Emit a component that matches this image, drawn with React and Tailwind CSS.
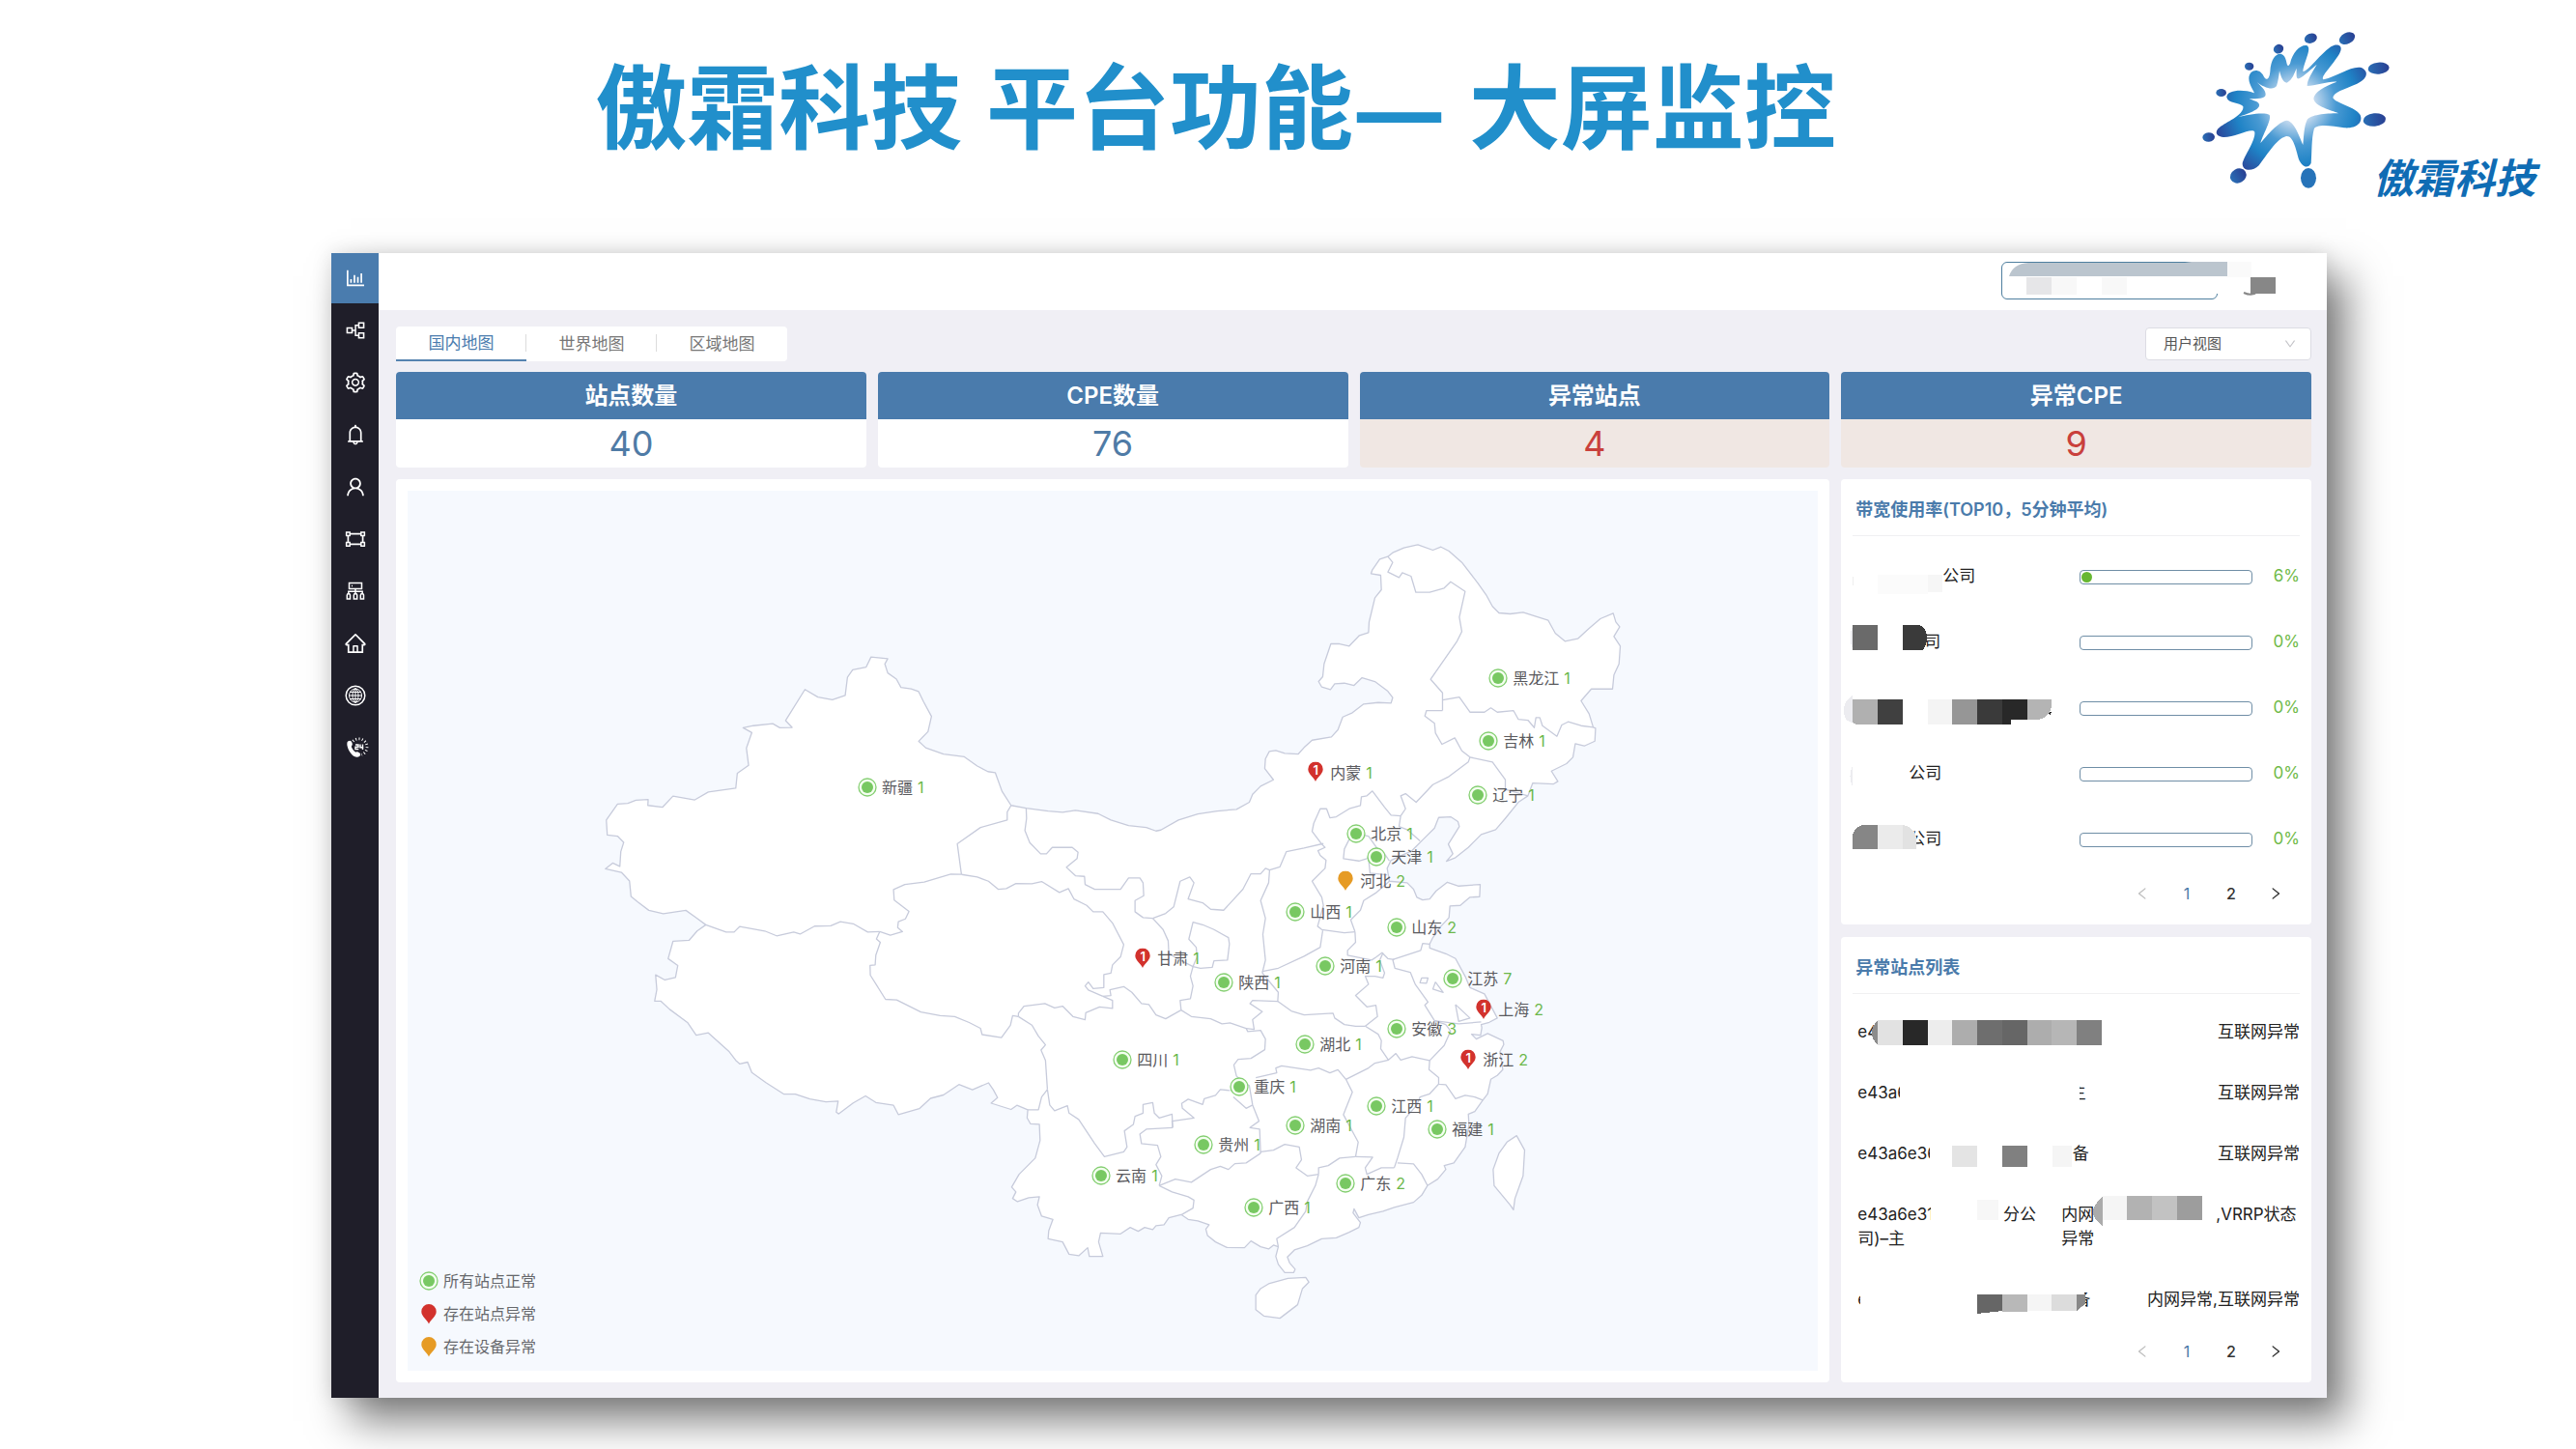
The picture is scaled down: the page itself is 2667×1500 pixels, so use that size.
import React, { useState } from 'react';
import {
  AiOutlineBarChart, AiOutlinePartition, AiOutlineSetting, AiOutlineBell,
  AiOutlineUser, AiOutlineGateway, AiOutlineHome, AiOutlineLeft, AiOutlineRight, AiOutlineDown,
} from 'react-icons/ai';

// Map canvas, in map units.
const VIEW = { x: 422, y: 508, w: 1460, h: 910 };

// Border points are stored per tile: [origin x, origin y, units per px x, units per px y].
const TILES = {
  nw: [600, 640, 3, 2.8],
  mid: [1000, 780, 3, 3],
  ne: [1300, 540, 3, 3],
  se: [1250, 960, 3, 3],
};

const toMap = ([tile, pts]) => {
  const [ox, oy, sx, sy] = TILES[tile];
  return pts.split(' ').map((p) => {
    const [x, y] = p.split(',').map(Number);
    return `${(ox + x / sx).toFixed(1)},${(oy + y / sy).toFixed(1)}`;
  }).join(' ');
};

const COAST = [
  ['nw', '905,111 957,116 948,131 957,157 984,175 998,199 1030,203 1053,211 1068,240 1093,283 1082,327 1053,355 1075,374 1130,392 1195,400 1235,427 1268,443 1291,446 1312,500 1340,541'],
  ['mid', '187,168 255,177 300,181 340,175 410,185 450,205 505,222 560,228 590,239 605,236 660,205 720,186 780,177 840,172 880,150 890,125 915,100 955,80'],
  ['ne', '28,765 30,735 42,712 62,709 90,718 132,720 150,700 175,677 235,667 255,645 270,605 300,592 335,565 380,560 420,562 425,545 410,525 370,495 330,483 305,507 275,500 245,502 232,520 205,512 195,495 208,480 212,440 233,378 260,378 290,385 322,352 350,343 352,310 370,235 390,210 388,165 358,160 362,148 385,115 410,107 425,95 460,80 503,70 550,87 575,77 600,90 640,125 690,190 715,225 735,262 755,282 790,285 830,280 870,293 908,305 930,345 960,370 1000,362 1035,330 1070,300 1110,283 1118,310 1130,325 1112,355 1132,385 1128,440 1112,475 1108,518 1042,518 1010,555 1035,595 1048,637 1055,640 1053,680 1020,695 992,688 985,730 965,750 918,773 938,805 925,813 860,810 845,850 815,870 775,920 745,955 700,970 660,1010 620,1042 592,1053 612,1030 598,1000 632,945 628,930 605,915 568,917 555,950 520,985 500,1005 485,1020 420,1050 408,1075 415,1115 470,1120 490,1140 500,1165 518,1173 540,1170 560,1145 595,1118 630,1130 697,1125 695,1163 665,1165 635,1190 603,1192 600,1228 575,1255 550,1290 540,1310'],
  ['se', '690,62 740,80 770,95 800,150 815,185 860,205 900,280 875,293 850,300 852,310 848,333 820,330 835,345 870,328 918,350 920,362 908,385 917,440 900,458 880,470 870,515 855,535 830,570 810,578 812,610 800,680 765,730 735,738 740,750 715,780 683,800 665,830 640,852 580,868 545,880 500,890 470,900 455,872 452,885 475,915 470,930 440,945 400,962 355,965 310,987 270,1000 248,1022 255,1040 272,1060 268,1070 240,1070 220,1045 212,1020 220,990 205,985 190,997 165,990 135,972 115,993 60,992 25,975 0,955'],
  ['mid', '745,1475 755,1462 720,1450 690,1445 668,1430 630,1440 615,1462 590,1465 580,1477 555,1470 535,1482 510,1470 480,1490 418,1487 412,1515 425,1560 383,1560 378,1533 350,1558 320,1553 300,1515 255,1505 257,1480 270,1445 235,1435 222,1400 228,1375 195,1378 160,1390 145,1380 155,1360 142,1345 165,1305 215,1255 230,1200 228,1150 200,1148 190,1130 192,1105'],
  ['nw', '1358,1410 1340,1422 1278,1404 1298,1388 1285,1365 1270,1345 1220,1365 1178,1350 1130,1380 1090,1390 1055,1420 990,1437 975,1410 920,1402 888,1383 850,1403 805,1435 797,1430 803,1398 765,1400 715,1392 670,1378 635,1378 580,1345 535,1315 522,1285 497,1290 485,1280 465,1255 400,1200 362,1207 335,1170 280,1132 252,1108 233,1108 240,1075 236,1032 265,1047 298,1040 305,1005 275,985 290,935 340,932 365,905 392,887 360,865 330,845 260,855 215,845 180,820 160,805 155,760 130,735 80,725 103,708 125,718 128,675 137,648 118,630 86,627 83,583 118,537 150,535 175,526 213,524 212,541 258,546 290,514 358,525 400,502 485,491 490,448 525,425 518,375 535,330 508,316 540,310 600,304 622,316 660,315 640,295 700,205 740,227 785,235 825,222 832,170 848,148 890,140'],
];

const ISLANDS = [
  ['se', '190,1105 250,1088 305,1085 315,1100 295,1120 280,1170 225,1212 175,1205 150,1185 150,1140 165,1120'],
  ['se', '960,645 985,690 980,770 955,840 950,875 940,860 890,800 887,750 905,700 930,665'],
];

const BORDERS = [
  ['nw', '1340,541 1328,560 1328,583 1245,605 1173,652 1186,741'],
  ['nw', '1186,741 1153,740 1070,763 1010,770 975,785 977,815 1023,848 1012,870 990,878 988,895 1003,907 965,917 932,907'],
  ['nw', '932,907 895,908 850,884 810,878 780,890 730,891 685,914 665,908 612,919 575,905 497,892 480,908 455,908 392,887'],
  ['nw', '932,907 922,928 934,938 920,975 918,1003 902,1005 903,1033 950,1103 985,1105 1060,1140 1120,1150 1165,1153 1210,1170 1245,1187 1250,1205 1310,1214 1338,1178 1345,1150 1363,1153'],
  ['nw', '1363,1153 1405,1178 1425,1210 1447,1235 1433,1250 1447,1280 1453,1364'],
  ['mid', '253,1042 235,1065 225,1105 192,1105'],
  ['mid', '-14,374 35,382 70,395 100,420 125,418 155,402 205,403 235,396 290,430 318,418 335,450 375,470 395,490 425,490 455,525 490,592 480,630 455,655 450,680 428,685 428,725 395,728 380,708 370,720 380,733 425,752'],
  ['mid', '425,752 455,765 455,790 415,785 372,803 370,825 332,815 300,783 275,788 245,775 180,783 163,805 163,815'],
  ['mid', '187,168 188,200 183,238 198,275 232,310 250,310 268,290 330,290 348,305 345,325 312,352 340,378 368,380 370,405 400,420 480,420 505,385 540,385 550,400 552,440 525,455 525,490 550,508 580,510'],
  ['mid', '580,510 620,495 645,475 665,395 695,382 708,400 690,450 735,462 760,482 800,485 860,420 885,372 915,372 930,355 943,360 975,350 995,303 1050,292 1110,278'],
  ['mid', '580,510 612,545 628,580 630,620 665,640 705,660'],
  ['mid', '705,660 718,630 715,600 692,575 705,522 735,530 770,545 815,570 818,590 812,640 770,642 765,662 728,665 705,660 697,690 705,720 697,760 665,765 668,795'],
  ['mid', '425,752 450,750 447,732 490,722 515,740 545,775 568,778 590,810 620,822 668,795'],
  ['mid', '668,795 700,815 760,822 795,838 820,835 870,852 875,862 915,858 930,885 928,918 885,945 845,948 832,965 840,1000 850,1010'],
  ['mid', '870,852 895,855 890,825 920,800 882,775 890,765 968,768 970,740 945,710 920,680'],
  ['mid', '920,680 930,640 922,560 930,510 915,455 940,400 943,360'],
  ['mid', '920,675 970,665 1050,628 1100,600 1108,548'],
  ['ne', '205,1000 215,1010 193,1020 200,1035 218,1050 215,1075 175,1115 205,1165 210,1190 192,1255 205,1265 275,1275 308,1272'],
  ['ne', '308,1272 295,1235 325,1205 335,1175 375,1150 415,1115'],
  ['ne', '308,1272 310,1305 285,1330 285,1345 360,1360 375,1350 392,1337 410,1355 430,1358'],
  ['ne', '205,1000 175,960 180,935 200,890 220,890 230,918 250,915 290,890 325,880 328,853 345,850 362,835 400,885 420,910 450,912'],
  ['ne', '450,912 445,945 470,955 510,990'],
  ['ne', '450,912 465,890 450,850 465,843 498,870 550,815 600,790 660,745 665,730'],
  ['ne', '665,730 735,745 775,800 775,830 845,850'],
  ['ne', '665,730 640,710 618,670 578,690 558,655 555,625 525,602 530,585 580,585'],
  ['ne', '580,585 580,530 543,488 625,370 640,340 632,295 650,215 605,185 585,205 540,218 497,218 482,168 455,157 445,172 410,155 425,125 410,107'],
  ['ne', '580,552 632,543 665,590 710,590 730,577 750,590 800,585 815,612 845,615 865,638 870,607 882,607 890,632 935,665 950,630 970,620 1010,632 1048,637'],
  ['ne', '290,985 275,1015 272,1045 320,1052 345,1045 375,1010 350,975 300,965 290,985'],
  ['ne', '350,1045 355,1090 408,1095'],
  ['ne', '375,1010 400,1030 415,1052'],
  ['se', '575,98 662,70 668,48 690,50'],
  ['se', '575,98 582,125 630,138 645,175 685,230 675,240 705,288 740,300'],
  ['se', '705,288 780,298 850,292'],
  ['se', '665,155 685,155 680,172 660,170 665,155'],
  ['se', '708,168 732,200 700,190 708,168'],
  ['se', '770,238 815,280 780,290 770,238'],
  ['se', '740,300 755,320 735,365 690,412'],
  ['se', '545,78 535,100 550,140 545,155 520,150 490,150 500,175 460,210 495,245 523,240 528,275 490,305'],
  ['se', '218,228 260,258 300,270 390,265 395,280 425,300 460,305 490,305'],
  ['se', '490,305 530,330 540,350 538,375 562,410 585,390 600,410 635,400 690,412'],
  ['se', '690,412 688,440 718,465 718,485 740,487 770,530 800,520 830,525 855,535'],
  ['se', '718,485 690,515 660,525 650,550 615,590 610,650 590,715 580,745'],
  ['se', '590,730 640,733 665,765 683,800'],
  ['se', '580,745 540,745 495,765 490,745 513,712 460,710'],
  ['se', '562,410 520,420 500,435 430,470 405,440 380,450 345,435 320,442 230,428 212,435 215,450 150,465'],
  ['se', '430,470 450,510 430,560 422,580 460,650 468,665 460,710'],
  ['se', '460,710 410,715 375,738 345,745 345,765'],
  ['se', '345,765 310,770 275,745 292,720 285,680 240,672 205,690 165,695'],
  ['se', '345,765 335,800 310,850 305,880 270,930 215,965 220,990'],
  ['mid', '850,1010 880,1030 890,1090 910,1140 882,1160 912,1165 915,1240'],
  ['mid', '830,1065 870,1100 890,1090'],
  ['mid', '820,1045 790,1042 775,1060 740,1070 735,1088 690,1072 670,1085 672,1100 708,1130 640,1140 642,1160'],
  ['mid', '642,1160 560,1165 540,1180 545,1210 595,1215 605,1250 590,1275 608,1310 600,1340'],
  ['mid', '253,1042 260,1090 275,1108 315,1092 320,1115 350,1135 400,1210 430,1250 490,1235 500,1220 492,1170 520,1150 525,1125 550,1115 550,1088 580,1082 585,1115 600,1130 640,1118 642,1160'],
  ['mid', '600,1340 650,1320 700,1330 760,1290 790,1280 815,1290 835,1272 870,1270 915,1240'],
  ['mid', '600,1340 640,1360 690,1375 708,1385 705,1410 670,1430'],
];

const coastPoints = COAST.map(toMap).join(' ');

const SITES = [
  { name: '新疆', count: 1, x: 898, y: 815 },
  { name: '内蒙', count: 1, x: 1362, y: 799, status: 'site', alarms: 1 },
  { name: '黑龙江', count: 1, x: 1551, y: 702 },
  { name: '吉林', count: 1, x: 1541, y: 767 },
  { name: '辽宁', count: 1, x: 1530, y: 823 },
  { name: '北京', count: 1, x: 1404, y: 863 },
  { name: '天津', count: 1, x: 1425, y: 887 },
  { name: '河北', count: 2, x: 1393, y: 911, status: 'device' },
  { name: '山西', count: 1, x: 1341, y: 943 },
  { name: '山东', count: 2, x: 1446, y: 959 },
  { name: '甘肃', count: 1, x: 1183, y: 991, status: 'site', alarms: 1 },
  { name: '陕西', count: 1, x: 1267, y: 1016 },
  { name: '河南', count: 1, x: 1372, y: 999 },
  { name: '江苏', count: 7, x: 1504, y: 1012 },
  { name: '上海', count: 2, x: 1536, y: 1044, status: 'site', alarms: 1 },
  { name: '安徽', count: 3, x: 1446, y: 1064 },
  { name: '浙江', count: 2, x: 1520, y: 1096, status: 'site', alarms: 1 },
  { name: '湖北', count: 1, x: 1351, y: 1080 },
  { name: '四川', count: 1, x: 1162, y: 1096 },
  { name: '重庆', count: 1, x: 1283, y: 1124 },
  { name: '江西', count: 1, x: 1425, y: 1144 },
  { name: '湖南', count: 1, x: 1341, y: 1164 },
  { name: '福建', count: 1, x: 1488, y: 1168 },
  { name: '贵州', count: 1, x: 1246, y: 1184 },
  { name: '云南', count: 1, x: 1140, y: 1216 },
  { name: '广东', count: 2, x: 1393, y: 1224 },
  { name: '广西', count: 1, x: 1298, y: 1249 },
];

const LEGEND = [
  { label: '所有站点正常' },
  { label: '存在站点异常', status: 'site' },
  { label: '存在设备异常', status: 'device' },
];

const STATS = [
  { label: '站点数量', value: 40 },
  { label: 'CPE数量', value: 76 },
  { label: '异常站点', value: 4, alert: true },
  { label: '异常CPE', value: 9, alert: true },
];

const TABS = ['国内地图', '世界地图', '区域地图'];

// Mosaic blocks are [x, y, width, height, fill], with y = 0 on the middle of the row.
const USAGE = [
  {
    name: <span className="ml-[93px]">公司</span>,
    percent: 6,
    blocks: [[0, 0, 1, 9, '#eeeeee'], [26, -2, 52, 20, '#fbfbfb'], [78, -2, 15, 18, '#f6f6f6']],
  },
  {
    name: <span className="ml-[74px]">司</span>,
    percent: 0,
    blocks: [[0, -18, 26, 26, '#6a6a6a'], [52, -18, 17, 26, '#3a3a3a']],
    extra: <><path d="M0-16q-5 11 0 22z" fill="#ececf0" /><path d="M69-18c5 1 8 7 8 13s-2 10-4 13h-4z" fill="#3a3a3a" /></>,
  },
  {
    name: null,
    percent: 0,
    blocks: [
      [26, -9, 26, 26, '#404040'], [78, -9, 25, 26, '#f4f4f4'], [103, -9, 26, 26, '#969696'],
      [129, -9, 26, 26, '#3a3a3a'], [155, -9, 26, 21, '#282828'], [155, 12, 9, 5, '#282828'],
    ],
    extra: (
      <>
        <path d="M0-13q-9 5-9 16t9 12z" fill="#ececf0" />
        <path d="M0-9h26v26H6q-4 0-6-3z" fill="#b0b0b0" />
        <path d="M181-9h25v5q-1 14-14 16h-11z" fill="#b4b4b4" />
        <path d="M202 5l4-1-1 3z" fill="#222222" />
      </>
    ),
  },
  {
    name: <span className="ml-[58px]">公司</span>,
    percent: 0,
    extra: <path d="M0-8q-5 10 0 22z" fill="#ececf0" />,
  },
  {
    name: <span className="ml-[58px]">公司</span>,
    percent: 0,
    blocks: [[26, -15, 26, 25, '#ebebeb']],
    extra: (
      <>
        <path d="M26-15v25H0V-5q3-10 13-10z" fill="#868686" />
        <path d="M52-15q12 2 14 14v11H52z" fill="#e2e2e2" />
      </>
    ),
  },
];

const ABNORMAL = [
  {
    name: 'e4',
    status: '互联网异常',
    blocks: [
      [26, -13, 26, 26, '#e2e2e2'], [52, -13, 26, 26, '#282828'], [78, -13, 25, 26, '#ededed'],
      [103, -13, 26, 26, '#adadad'], [129, -13, 26, 26, '#6e6e6e'], [155, -13, 26, 26, '#666666'],
      [181, -13, 25, 26, '#adadad'], [206, -13, 26, 26, '#b6b6b6'], [232, -13, 26, 26, '#808080'],
    ],
    extra: <path d="M26-13q-12 13 0 26z" fill="#8c8c8c" />,
  },
  {
    name: <>e43a6<span className="ml-[168px]">主</span></>,
    status: '互联网异常',
    blocks: [[49, -12, 186, 24, '#ffffff']],
  },
  {
    name: <>e43a6e36<span className="ml-[140px]">备</span></>,
    status: '互联网异常',
    blocks: [
      [80, -12, 20, 24, '#ffffff'], [103, -9, 26, 22, '#e4e4e4'],
      [155, -9, 26, 22, '#808080'], [207, -9, 20, 22, '#f5f5f5'],
    ],
  },
  {
    name: <>e43a6e31<span className="ml-[72px]">分公</span><br />司)–主</>,
    status: (
      <span className="block text-left pl-0.5">
        内网<span className="inline-block w-[126px]" />,VRRP状态<br />异常
      </span>
    ),
    blocks: [
      [81, -24, 50, 24, '#ffffff'], [129, -28, 22, 21, '#f7f7f7'], [259, -32, 25, 25, '#f5f5f5'],
      [284, -32, 26, 25, '#b2b2b2'], [310, -32, 26, 25, '#c2c2c2'], [336, -32, 26, 25, '#9d9d9d'],
    ],
    extra: <path d="M259-31q-20 16 0 30z" fill="#ababab" />,
  },
  {
    name: <>e<span className="ml-[214px]">备</span></>,
    status: '内网异常,互联网异常',
    blocks: [
      [8, -12, 121, 26, '#ffffff'], [155, -6, 26, 18, '#b8b8b8'],
      [181, -6, 25, 17, '#f5f5f5'], [206, -6, 26, 17, '#dcdcdc'], [228, -12, 12, 6, '#ffffff'],
    ],
    extra: (
      <>
        <path d="M129-6h26v17l-26 3z" fill="#666666" />
        <path d="M232-6h9v10q-4 2-9 7z" fill="#888888" />
        <path d="M232 11l9-7v8h-9z" fill="#ffffff" />
      </>
    ),
  },
];

const Mosaic = ({ blocks = [], children }) => (
  <svg className="absolute left-0 top-1/2 -translate-y-1/2 overflow-visible pointer-events-none" width="260" height="50" viewBox="0 -25 260 50" shapeRendering="crispEdges">
    {blocks.map(([x, y, w, h, fill]) => <rect key={`${x}-${y}`} x={x} y={y} width={w} height={h} fill={fill} />)}
    {children}
  </svg>
);

const TopologyIcon = () => (
  <svg width="20" height="20" viewBox="0 0 20 20" fill="none" stroke="currentColor" strokeWidth="1.5">
    <path d="M3.5 1.5h13v6h-13zM10 7.500v5M2.800 13v-2.800h14.400V13M6 4.500h1" />
    <path d="M1.300 14l.7-1.300h1.800l.7 1.300v4H1.300zM8.300 14l.7-1.300h2l.7 1.300v4H8.300zM15.300 14l.7-1.300h1.800l.7 1.300v4h-3.200z" />
  </svg>
);

const GlobeIcon = () => (
  <svg width="22" height="22" viewBox="0 0 22 22" fill="none" stroke="currentColor">
    <circle cx="11" cy="11" r="9.800" strokeWidth="1.500" />
    <ellipse cx="11" cy="11" rx="6.500" ry="7" />
    <ellipse cx="11" cy="11" rx="3" ry="7" />
    <path d="M11 3v16M4 11h14M5.500 7.500h11M5.500 14.500h11" />
  </svg>
);

const HotlineIcon = () => (
  <svg width="24" height="24" viewBox="0 0 24 24" fill="none" className="ml-1">
    <path d="M1.500 6.500C2 4.800 4.500 4 5.500 5.200c1 1.500 1.800 3 1 4.200-.8 1-1 1.500 0 3 1.200 2 2.600 3.600 4 4.300 1.200-.8 2-.4 3.500.6 1.500 1.100 1.500 2.400.4 3.400-2.200 2-5.600 1.200-8.200-1.700C3 15.500.700 10 1.500 6.500z" fill="currentColor" />
    <path d="M10 9h3v2.200h-3v2.300h3.300M15 8.500v3.200h3.300M17.500 8.500v5.500" stroke="currentColor" strokeWidth="1.400" />
    <path d="M7.500 5.300A8.500 8.500 0 1 1 16.400 19.300" stroke="currentColor" strokeWidth="2.800" strokeDasharray="1 2.300" />
  </svg>
);

const NAV = [
  { label: '监控', icon: <AiOutlineBarChart size={24} /> },
  { label: '拓扑', icon: <AiOutlinePartition size={24} /> },
  { label: '设置', icon: <AiOutlineSetting size={24} /> },
  { label: '告警', icon: <AiOutlineBell size={24} /> },
  { label: '用户', icon: <AiOutlineUser size={24} /> },
  { label: '网关', icon: <AiOutlineGateway size={24} /> },
  { label: '设备', icon: <TopologyIcon /> },
  { label: '首页', icon: <AiOutlineHome size={24} /> },
  { label: '网络', icon: <GlobeIcon /> },
  { label: '热线', icon: <HotlineIcon /> },
];

const Marker = ({ status, alarms }) => {
  if (!status) {
    return (
      <svg width="20" height="20" viewBox="0 0 20 20" className="shrink-0">
        <circle cx="10" cy="10" r="9" fill="#f4fff0" stroke="#85cf72" strokeWidth="1.300" />
        <circle cx="10" cy="10" r="6" fill="#78c862" />
      </svg>
    );
  }
  return (
    <span className="relative flex w-5 justify-center shrink-0">
      <svg width="16" height="21" viewBox="0 0 16 21">
        <path d="M8 20.500C6.500 16.500.300 13 .300 7.800a7.700 7.700 0 0 1 15.400 0C15.700 13 9.500 16.500 8 20.500z" fill={status === 'site' ? '#d2322d' : '#e69b25'} />
      </svg>
      {alarms && <span className="absolute inset-x-0 top-0 text-center text-[13px] leading-4 font-semibold text-white">{alarms}</span>}
    </span>
  );
};

const Logo = () => (
  <svg width="200" height="167" viewBox="50 58 600 501" className="shrink-0 self-start">
    <defs>
      <radialGradient id="splash" gradientUnits="userSpaceOnUse" cx="350" cy="290" r="260">
        <stop offset="0" stopColor="#ffffff" />
        <stop offset="0.220" stopColor="#c5daef" />
        <stop offset="0.480" stopColor="#4a9ad3" />
        <stop offset="0.720" stopColor="#1f83c6" />
        <stop offset="1" stopColor="#2b479b" />
      </radialGradient>
      <linearGradient id="drop" x1="0" y1="0" x2="1" y2="0">
        <stop offset="0" stopColor="#2a6fb5" />
        <stop offset="1" stopColor="#293f92" />
      </linearGradient>
    </defs>
    <path
      fill="url(#splash)"
      d="M135 270C135 245 190 245 218 256C228 262 204 235 204 212C205 180 240 180 250 205C258 220 268 215 270 190C272 150 290 132 305 136C326 142 318 190 332 165C340 130 365 105 385 110C400 120 375 160 372 190C390 190 440 115 470 108C500 105 492 130 475 150C455 180 425 208 436 215C480 205 520 172 553 178C580 190 570 215 540 228C500 245 465 255 465 272C475 290 535 300 550 325C560 350 535 368 500 365C460 358 410 352 406 370C398 400 400 440 397 475C387 495 367 485 358 460C350 430 340 385 318 392C290 400 260 450 235 482C215 502 183 500 184 475C190 450 225 405 222 378C215 362 160 395 125 394C95 390 98 370 122 357C150 340 190 320 186 298C175 285 140 290 135 270Z"
    />
    <path
      fill="#ffffff"
      d="M205 275C230 275 255 275 256 262C256 245 240 235 228 222C250 240 280 250 290 235C295 220 297 205 299 188C303 205 310 225 322 225C340 215 345 195 352 180C352 200 350 215 360 212C375 205 400 180 415 168C400 195 385 215 385 235C410 235 450 220 477 222C440 235 405 255 405 275C410 300 460 310 482 320C440 320 395 325 385 340C375 360 375 390 372 418C360 390 345 345 322 342C295 345 260 390 240 412C250 380 275 340 268 325C250 315 200 325 170 332C200 320 240 310 236 292C232 282 215 280 205 275Z"
    />
    <g fill="url(#drop)">
      <ellipse cx="118" cy="256" rx="16" ry="12" />
      <ellipse cx="205" cy="174" rx="14" ry="12" />
      <ellipse cx="296" cy="120" rx="16" ry="14" transform="rotate(-30 296 120)" />
      <ellipse cx="396" cy="87" rx="20" ry="15" transform="rotate(-20 396 87)" />
      <ellipse cx="509" cy="87" rx="26" ry="17" transform="rotate(-25 509 87)" />
      <ellipse cx="607" cy="180" rx="33" ry="18" transform="rotate(-5 607 180)" />
      <ellipse cx="594" cy="340" rx="35" ry="20" transform="rotate(-5 594 340)" />
      <ellipse cx="79" cy="394" rx="19" ry="14" transform="rotate(-5 79 394)" />
      <ellipse cx="171" cy="514" rx="26" ry="22" transform="rotate(-30 171 514)" />
    </g>
    <ellipse cx="389" cy="521" rx="24" ry="31" fill="#2673b9" />
  </svg>
);

const Pagination = () => (
  <nav className="mt-auto mb-4 flex h-8 justify-end pr-0.5 text-base text-[#333]">
    <button className="flex w-[46px] items-center justify-center text-[#c0c0c0]" aria-label="上一页" disabled><AiOutlineLeft size={16} /></button>
    <button className="w-[46px] text-[#4878a8]">1</button>
    <button className="w-[46px] font-medium">2</button>
    <button className="flex w-[46px] items-center justify-center" aria-label="下一页"><AiOutlineRight size={16} /></button>
  </nav>
);

const Panel = ({ title, children }) => (
  <section className="flex flex-1 flex-col rounded bg-white px-3">
    <h2 className="border-b border-[#f0f0f2] px-[3px] pt-5 pb-3.5 text-lg leading-6 font-semibold text-[#4a7bab]">{title}</h2>
    {children}
    <Pagination />
  </section>
);

const SiteMap = () => (
  <section className="col-span-3 rounded bg-white p-3">
    <div className="relative aspect-[1460/911] w-full bg-[#f6f9fe]">
      <svg className="block h-full w-full" viewBox={`${VIEW.x} ${VIEW.y} ${VIEW.w} ${VIEW.h}`} fill="none" stroke="#c7cbdb" strokeWidth="1.300" strokeLinejoin="round">
        <polygon points={coastPoints} fill="#ffffff" />
        {ISLANDS.map((b) => <polygon key={b[1]} points={toMap(b)} fill="#ffffff" />)}
        {BORDERS.map((b) => <polyline key={b[1]} points={toMap(b)} />)}
      </svg>
      {SITES.map((s) => (
        <div
          key={s.name}
          className="absolute -ml-2.5 flex -translate-y-1/2 items-center gap-[5px] text-base leading-5 whitespace-nowrap text-[#5a5a5e]"
          style={{ left: `${((s.x - VIEW.x) / VIEW.w) * 100}%`, top: `${((s.y - VIEW.y) / VIEW.h) * 100}%` }}
        >
          <Marker status={s.status} alarms={s.alarms} />
          <span>{s.name}</span>
          <span className="text-[#6cb84a]">{s.count}</span>
        </div>
      ))}
      <ul className="absolute bottom-2 left-3 text-base text-[#66686c]">
        {LEGEND.map((l) => (
          <li key={l.label} className="flex h-[34px] items-center gap-[5px]">
            <Marker status={l.status} />
            {l.label}
          </li>
        ))}
      </ul>
    </div>
  </section>
);

const App = () => {
  const [tab, setTab] = useState(TABS[0]);

  return (
    <div className="min-h-screen overflow-hidden bg-white pb-[53px] font-['Inter','Noto_Sans_CJK_SC',sans-serif]">
      <header className="flex items-start pt-[30px] pb-14 pl-60">
        <h1 className="mt-2.5 flex-1 text-center font-['Open_Sans','Noto_Sans_CJK_SC',sans-serif] text-[95px] leading-[140px] font-bold text-[#218fcb]">
          傲霜科技 平台功能— 大屏监控
        </h1>
        <div className="flex h-[176px] w-[390px] items-end">
          <Logo />
          <span className="-ml-5 text-[42px] leading-[42px] font-bold whitespace-nowrap text-[#0f6cb4] italic">傲霜科技</span>
        </div>
      </header>

      <div className="mr-[258px] ml-[343px] flex shadow-[20px_24px_40px_rgba(0,0,0,0.5),0_0_20px_rgba(0,0,0,0.12)]">
        <nav className="flex w-[49px] shrink-0 flex-col gap-0.5 bg-[#1f1e29] text-white">
          {NAV.map((n, i) => (
            <a key={n.label} href="#" title={n.label} className={`flex h-[52px] items-center justify-center ${i === 0 ? 'bg-[#4a7cae]' : ''}`}>
              {n.icon}
            </a>
          ))}
        </nav>

        <div className="min-w-0 flex-1 bg-[#f0eff5]">
          <div className="flex h-[59px] items-center justify-end bg-white pr-[53px] pb-0.5">
            <div className="relative w-[284px]">
              <input aria-label="搜索" className="block h-[39px] w-[224px] rounded-md border border-[#4f7f9f] outline-none" />
              <svg className="absolute top-0 left-0" width="284" height="39" viewBox="0 0 284 39">
                <path d="M8 15Q12 2 28 1H190L204-1H234V15z" fill="#bbc5ce" />
                <path d="M216 15h18v18h-11z" fill="#ffffff" />
                <path d="M234-1h25v17h-25z" fill="#fafafa" />
                <path d="M26 16h26v18H26z" fill="#e6e6e8" />
                <path d="M52 16h26v18H52zM104 16h26v18h-26z" fill="#f8f8f8" />
                <path d="M258 16h26v17h-26z" fill="#878787" />
                <path d="M251 32q9 4 14-1" fill="none" stroke="#878787" strokeWidth="2" />
              </svg>
            </div>
          </div>

          <div className="pt-[17px] pr-4 pb-4 pl-[18px]">
            <div className="flex h-9 items-center justify-between">
              <div className="flex h-9 rounded bg-white" role="tablist">
                {TABS.map((t, i) => (
                  <button
                    key={t}
                    role="tab"
                    aria-selected={t === tab}
                    onClick={() => setTab(t)}
                    className={`relative w-[135px] text-[17px] leading-[34px] cursor-pointer ${t === tab ? 'border-b-2 border-[#5583b0] text-[#4a7cae]' : 'text-[#777]'}`}
                  >
                    {t}
                    {i < TABS.length - 1 && <span className="absolute top-2 right-0 h-[18px] w-px bg-[#dcdcdc]" />}
                  </button>
                ))}
              </div>
              <div className="relative w-[172px]">
                <select aria-label="视图" className="block h-[34px] w-full appearance-none rounded border border-[#dcdce4] bg-white px-[18px] text-[15px] text-[#555] outline-none">
                  <option>用户视图</option>
                </select>
                <AiOutlineDown size={14} className="pointer-events-none absolute top-2.5 right-[15px] text-[#c4c4c8]" />
              </div>
            </div>

            <div className="mt-[11px] grid grid-cols-4 gap-3">
              {STATS.map((s) => (
                <div key={s.label} className={`overflow-hidden rounded text-center ${s.alert ? 'bg-[#f0e7e3]' : 'bg-white'}`}>
                  <div className="bg-[#4a7bac] text-2xl leading-[49px] font-semibold text-white">{s.label}</div>
                  <div className={`text-4xl leading-[50px] ${s.alert ? 'text-[#c9403c]' : 'text-[#4f7ba6]'}`}>{s.value}</div>
                </div>
              ))}
              <SiteMap />

              <div className="flex flex-col gap-[13px]">
                <Panel title="带宽使用率(TOP10，5分钟平均)">
                  <table className="mt-2 w-full text-[17px] text-[#222]">
                    <tbody>
                      {USAGE.map((u, i) => (
                        <tr key={i} className="h-[68px]">
                          <td className="relative">
                            {u.name}
                            <Mosaic blocks={u.blocks}>{u.extra}</Mosaic>
                          </td>
                          <td className="w-[179px]">
                            <div className="h-[15px] rounded border border-[#6f8ea6] p-px">
                              <div className="h-full rounded-full bg-[#67b731]" style={{ width: `${u.percent}%` }} />
                            </div>
                          </td>
                          <td className="w-[49px] text-right text-[#6fba48]">{u.percent}%</td>
                        </tr>
                      ))}
                    </tbody>
                  </table>
                </Panel>

                <Panel title="异常站点列表">
                  <table className="mt-2 w-full table-fixed text-[17px] leading-[25px] text-[#222]">
                    <tbody>
                      {ABNORMAL.map((a, i) => (
                        <tr key={i}>
                          <td className="relative w-[214px] py-[19px] pl-[5px] whitespace-nowrap">
                            {a.name}
                            <Mosaic blocks={a.blocks}>{a.extra}</Mosaic>
                          </td>
                          <td className="py-[19px] text-right whitespace-nowrap">{a.status}</td>
                        </tr>
                      ))}
                    </tbody>
                  </table>
                </Panel>
              </div>
            </div>
          </div>
        </div>
      </div>
    </div>
  );
};

export default App;
